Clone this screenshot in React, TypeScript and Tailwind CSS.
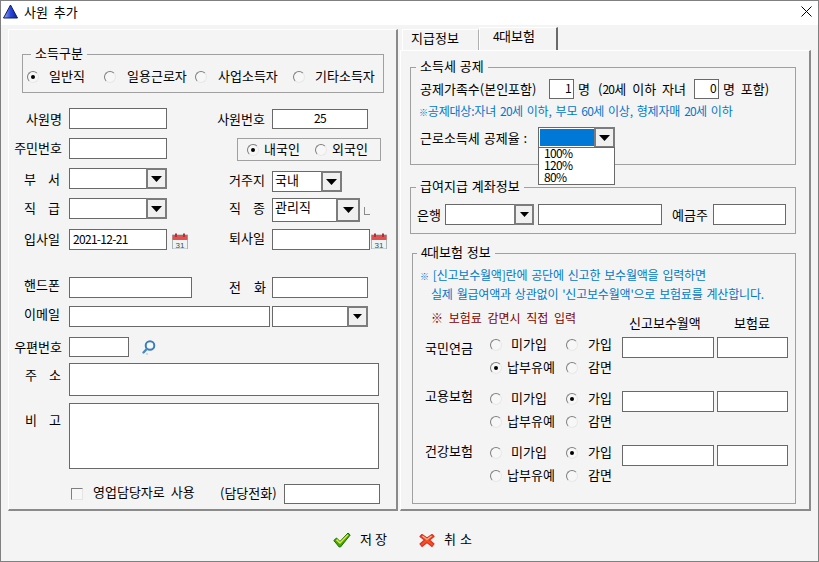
import React from "react";

const cx = (...a: (string | undefined | false)[]) => a.filter(Boolean).join(" ");

function D({ children }: { children?: React.ReactNode }) {
  return <span className="text-[12px] tracking-[-0.7px]">{children}</span>;
}

function Box({ className, children }: { className?: string; children?: React.ReactNode }) {
  return <div className={cx("shrink-0 border border-[#696969] bg-white px-[3px] flex items-center", children ? "pb-[2px]" : "", className)}>{children}</div>;
}

function Arrow({ small }: { small?: boolean }) {
  return (
    <svg width={small ? 9 : 11} height={small ? 5 : 6} viewBox="0 0 11 6">
      <path d="M0 0H11L5.5 6Z" fill="#000" />
    </svg>
  );
}

function Combo({ className, btn = "w-[21px]", text, small }: { className?: string; btn?: string; text?: string; small?: boolean }) {
  return (
    <div className={cx("shrink-0 flex border border-[#696969] bg-white", className)}>
      <div className="flex-1 pl-[2px] leading-[16px]">{text}</div>
      <div className={cx("-my-[1px] -mr-[1px] shrink-0 border-2 border-[#7c7c7c] bg-[#f0f0f0] flex items-center justify-center", btn)}>
        <Arrow small={small} />
      </div>
    </div>
  );
}

function Radio({ checked, className, children }: { checked?: boolean; className?: string; children?: React.ReactNode }) {
  return (
    <div className={cx("flex items-center shrink-0", className)}>
      <span className="w-[12px] h-[12px] rounded-full border border-t-[#7f7f7f] border-l-[#7f7f7f] border-r-[#e8e8e8] border-b-[#e8e8e8] bg-[#f7f7f7] flex items-center justify-center shrink-0">
        {checked && <span className="w-[4px] h-[4px] rounded-full bg-black" />}
      </span>
      <span className="whitespace-nowrap -translate-y-[1px]">{children}</span>
    </div>
  );
}

function Group({ title, className, legend, children }: { title: React.ReactNode; className?: string; legend: string; children?: React.ReactNode }) {
  return (
    <div className={cx("relative shrink-0 border border-[#a0a0a0]", className)}>
      <span className={cx("absolute -top-[10px] bg-[#f4f4f4] px-[4px] whitespace-nowrap leading-[16px] [word-spacing:1px]", legend)}>{title}</span>
      {children}
    </div>
  );
}

function Lbl({ className, children }: { className?: string; children?: React.ReactNode }) {
  return <div className={cx("shrink-0 text-right whitespace-nowrap", className)}>{children}</div>;
}

function Spaced({ a, b, className }: { a: string; b: string; className?: string }) {
  return (
    <div className={cx("shrink-0 flex justify-between", className)}>
      <span>{a}</span>
      <span>{b}</span>
    </div>
  );
}

function Calendar() {
  return (
    <svg width="16" height="16" viewBox="0 0 16 16" className="shrink-0">
      <rect x="0.5" y="2" width="15" height="14" fill="#eef3f3" stroke="#a9b4b4" />
      <rect x="0.5" y="2" width="15" height="5" fill="#e2504f" />
      <rect x="3" y="0.5" width="2" height="3.5" fill="#a33" />
      <rect x="11" y="0.5" width="2" height="3.5" fill="#a33" />
      <text x="8" y="14.5" textAnchor="middle" fontSize="8" fontFamily="Liberation Sans, sans-serif" fill="#35506a">31</text>
    </svg>
  );
}

function SearchIcon() {
  return (
    <svg width="14" height="15" viewBox="0 0 14 15" className="shrink-0">
      <circle cx="8" cy="5.5" r="4.3" fill="#f4f8fb" stroke="#3d7db5" strokeWidth="2" />
      <path d="M4.8 9L1.5 12.5" stroke="#4a8ac0" strokeWidth="2.4" strokeLinecap="round" />
      <path d="M4 14h2" stroke="#b8b8b8" strokeWidth="1" />
    </svg>
  );
}

function CheckIcon() {
  return (
    <svg width="18" height="16" viewBox="0 0 18 16" className="shrink-0">
      <path d="M0.8 8.5L3.5 6L7 9.5L15 1L17.2 3L7.5 15H6.2Z" fill="#3fa90a" stroke="#1d6b05" strokeWidth="1" strokeLinejoin="round" />
      <path d="M3.5 7.6L7 11L15 2.8" fill="none" stroke="#dfe93a" strokeWidth="1.5" />
    </svg>
  );
}

function XIcon() {
  return (
    <svg width="16" height="16" viewBox="0 0 16 16" className="shrink-0">
      <path d="M3 2.5L8 6L13 2.5L15 4.5L10.5 8L15 12L13 14.5L8 10.5L3 14.5L1 12L5.5 8L1 4.5Z" fill="#f4511e" stroke="#d8322a" strokeWidth="1.2" strokeLinejoin="round" />
      <path d="M3.5 4L8 7.5L12.5 4" fill="none" stroke="#ffb48a" strokeWidth="1.2" />
    </svg>
  );
}

function Insurance({ name, labelClass, sel }: { name: string; labelClass: string; sel: number }) {
  return (
    <div className="flex h-[54px] items-start">
      <div className={cx("w-[77px] shrink-0 pl-[12px] whitespace-nowrap", labelClass)}>{name}</div>
      <div className="w-[76px] shrink-0 flex flex-col gap-[7px]">
        <Radio checked={sel === 0} className="gap-[9px] h-[16px]">미가입</Radio>
        <Radio checked={sel === 2} className="gap-[5px] h-[16px]">납부유예</Radio>
      </div>
      <div className="w-[56px] shrink-0 flex flex-col gap-[7px]">
        <Radio checked={sel === 1} className="gap-[10px] h-[16px]">가입</Radio>
        <Radio className="gap-[10px] h-[16px]">감면</Radio>
      </div>
      <Box className="w-[92px] h-[21px]" />
      <Box className="w-[71px] h-[21px] ml-[3px]" />
    </div>
  );
}

export default function App() {
  return (
    <div className="w-[819px] h-[562px] overflow-hidden border border-[#808080] bg-[#f4f4f4] text-black text-[13px] leading-[16px] [word-spacing:3px] font-['Noto_Sans_CJK_KR','Liberation_Sans',sans-serif] flex flex-col">
      {/* title bar */}
      <div className="h-[24px] bg-white flex items-center shrink-0 pl-[2px] pr-[6px] pb-[3px]">
        <svg width="15" height="15" viewBox="0 0 15 15" className="shrink-0">
          <defs>
            <linearGradient id="tri" x1="0" x2="1" y1="0" y2="0">
              <stop offset="0" stopColor="#9db4f0" />
              <stop offset="0.5" stopColor="#2a46d8" />
              <stop offset="1" stopColor="#0c1f96" />
            </linearGradient>
          </defs>
          <path d="M7.5 1L14.5 14H0.5Z" fill="url(#tri)" stroke="#101a66" strokeWidth="1" />
        </svg>
        <span className="ml-[6px]">사원 추가</span>
        <svg width="11" height="11" viewBox="0 0 11 11" className="ml-auto">
          <path d="M0.5 0.5L10.5 10.5M10.5 0.5L0.5 10.5" stroke="#000" strokeWidth="1" />
        </svg>
      </div>

      <div className="flex pl-[7px] pr-[7px] items-end h-[486px] shrink-0">
        {/* left panel */}
        <div className="w-[390px] h-[482px] shrink-0 border-t border-l border-t-white border-l-white border-r-2 border-b-2 border-r-[#8a8a8a] border-b-[#8a8a8a] pl-[13px]">
          <Group title="소득구분" legend="left-[8px]" className="mt-[24px] w-[362px] h-[39px]">
            <div className="flex pl-[4px] pt-[14px]">
              <Radio checked className="gap-[10px] w-[77px]">일반직</Radio>
              <Radio className="gap-[11px] w-[91px]">일용근로자</Radio>
              <Radio className="gap-[11px] w-[98px]">사업소득자</Radio>
              <Radio className="gap-[10px]">기타소득자</Radio>
            </div>
          </Group>

          <div className="-ml-[13px]">
            <div className="flex mt-[15px] items-center h-[21px]">
              <Lbl className="w-[53px]">사원명</Lbl>
              <Box className="w-[98px] h-[21px] ml-[7px]" />
              <Lbl className="w-[98px]">사원번호</Lbl>
              <Box className="w-[96px] h-[20px] ml-[7px] justify-center"><D>25</D></Box>
            </div>

            <div className="flex mt-[9px] items-start h-[23px]">
              <Lbl className="w-[53px] pt-[2px]">주민번호</Lbl>
              <Box className="w-[98px] h-[21px] ml-[7px]" />
              <div className="ml-[70px] w-[144px] h-[23px] shrink-0 border border-[#a0a0a0] flex items-center pl-[9px]">
                <Radio checked className="gap-[5px] w-[68px]">내국인</Radio>
                <Radio className="gap-[5px]">외국인</Radio>
              </div>
            </div>

            <div className="flex mt-[7px] items-start h-[24px]">
              <Spaced a="부" b="서" className="w-[36px] ml-[15px] mt-[3px]" />
              <Combo className="w-[98px] h-[21px] ml-[9px]" />
              <Lbl className="w-[98px] mt-[4px]">거주지</Lbl>
              <Combo className="w-[70px] h-[21px] ml-[7px] mt-[3px]" text="국내" />
            </div>

            <div className="flex mt-[6px] items-start h-[24px]">
              <Spaced a="직" b="급" className="w-[36px] ml-[15px] mt-[2px]" />
              <Combo className="w-[98px] h-[21px] ml-[9px]" />
              <Spaced a="직" b="종" className="w-[36px] ml-[62px] mt-[2px]" />
              <Combo className="w-[88px] h-[24px] ml-[7px]" btn="w-[24px]" text="관리직" />
              <div className="w-[6px] h-[8px] ml-[4px] mt-[9px] border-l border-b border-[#8a8a8a]" />
            </div>

            <div className="flex mt-[7px] items-start h-[21px]">
              <Lbl className="w-[51px] mt-[2px]">입사일</Lbl>
              <Box className="w-[98px] h-[21px] ml-[9px]"><D>2021-12-21</D></Box>
              <div className="ml-[5px] mt-[4px]"><Calendar /></div>
              <Lbl className="w-[77px] mt-[1px]">퇴사일</Lbl>
              <Box className="w-[98px] h-[21px] ml-[7px]" />
              <div className="ml-[1px] mt-[4px]"><Calendar /></div>
            </div>

            <div className="flex mt-[27px] items-start h-[21px]">
              <Lbl className="w-[51px]">핸드폰</Lbl>
              <Box className="w-[123px] h-[21px] ml-[9px]" />
              <Spaced a="전" b="화" className="w-[37px] ml-[37px] mt-[2px]" />
              <Box className="w-[96px] h-[21px] ml-[6px]" />
            </div>

            <div className="flex mt-[8px] items-start h-[21px]">
              <Lbl className="w-[51px]">이메일</Lbl>
              <Box className="w-[201px] h-[21px] ml-[9px]" />
              <Combo className="w-[96px] h-[21px] ml-[2px]" small />
            </div>

            <div className="flex mt-[10px] items-center h-[20px]">
              <Lbl className="w-[53px]">우편번호</Lbl>
              <Box className="w-[60px] h-[20px] ml-[7px]" />
              <div className="ml-[13px]"><SearchIcon /></div>
            </div>

            <div className="flex mt-[6px] items-start h-[33px]">
              <Spaced a="주" b="소" className="w-[36px] ml-[16px] mt-[4px]" />
              <Box className="w-[310px] h-[33px] ml-[8px]" />
            </div>

            <div className="flex mt-[7px] items-start h-[66px]">
              <Spaced a="비" b="고" className="w-[36px] ml-[16px] mt-[9px]" />
              <Box className="w-[310px] h-[66px] ml-[8px]" />
            </div>

            <div className="flex mt-[15px] items-center h-[20px]">
              <span className="ml-[62px] w-[12px] h-[12px] shrink-0 border border-t-[#7f7f7f] border-l-[#7f7f7f] border-r-[#e4e4e4] border-b-[#e4e4e4] bg-[#f7f7f7]" />
              <span className="ml-[10px] w-[127px] shrink-0 whitespace-nowrap -translate-y-[2px]">영업담당자로 사용</span>
              <span className="shrink-0 w-[64px] whitespace-nowrap -translate-y-[1px]">(담당전화)</span>
              <Box className="w-[96px] h-[20px]" />
            </div>
          </div>
        </div>

        {/* right column */}
        <div className="ml-[2px] w-[411px] shrink-0 flex flex-col h-[484px]">
          <div className="flex items-end h-[23px] pl-[2px] shrink-0">
            <div className="w-[77px] h-[21px] shrink-0 border-t border-l border-t-white border-l-white border-r border-r-[#b0b0b0] pl-[8px]">지급정보</div>
            <div className="w-[79px] h-[23px] shrink-0 border-t border-l border-t-white border-l-white border-r-2 border-r-[#6a6a6a] pl-[13px]"><D>4</D>대보험</div>
          </div>
          <div className="flex-1 border-t border-l border-t-white border-l-white border-r-2 border-b-2 border-r-[#8a8a8a] border-b-[#8a8a8a] pl-[9px]">
            <Group title="소득세 공제" legend="left-[5px]" className="mt-[16px] w-[386px] h-[98px] pl-[9px]">
              <div className="flex items-center h-[20px] mt-[11px]">
                <span className="w-[129px] shrink-0 whitespace-nowrap">공제가족수(본인포함)</span>
                <Box className="w-[25px] h-[20px] justify-end !px-[2px]"><D>1</D></Box>
                <span className="ml-[4px] w-[20px] shrink-0">명</span>
                <span className="w-[96px] shrink-0 whitespace-nowrap">(<D>20</D>세 이하 자녀</span>
                <Box className="w-[25px] h-[20px] justify-end !px-[2px]"><D>0</D></Box>
                <span className="ml-[4px] shrink-0 whitespace-nowrap">명 포함)</span>
              </div>
              <div className="mt-[4px] h-[16px] -ml-[1px] text-[12px] tracking-[-0.2px] [word-spacing:1.5px] text-[#0078c8] whitespace-nowrap"><span className="text-[9px] font-bold">※</span>공제대상:자녀 <D>20</D>세 이하, 부모 <D>60</D>세 이상, 형제자매 <D>20</D>세 이하</div>
              <div className="flex mt-[8px] items-start">
                <span className="w-[118px] shrink-0 whitespace-nowrap mt-[3px] [word-spacing:1px]">근로소득세 공제율 :</span>
                <div className="relative w-[77px] h-[21px] shrink-0 flex border border-[#696969] bg-white p-[1px] pr-0">
                  <div className="flex-1 bg-[#0078d7]" />
                  <div className="-my-[2px] -mr-[1px] w-[21px] shrink-0 border-2 border-[#7c7c7c] bg-[#f0f0f0] flex items-center justify-center">
                    <Arrow />
                  </div>
                  <div className="absolute left-[-1px] top-[19px] w-[77px] h-[38px] border border-[#696969] bg-white pl-[5px] leading-[12px] text-[12px] tracking-[-0.7px] z-10">
                    <div className="h-[12px] -translate-y-[1px]">100%</div>
                    <div className="h-[12px] -translate-y-[1px]">120%</div>
                    <div className="h-[12px] -translate-y-[1px]">80%</div>
                  </div>
                </div>
              </div>
            </Group>

            <Group title="급여지급 계좌정보" legend="left-[5px]" className="mt-[22px] w-[386px] h-[47px] pl-[6px]">
              <div className="flex items-center h-[21px] mt-[16px]">
                <span className="w-[28px] shrink-0">은행</span>
                <Combo className="w-[89px] h-[21px]" small btn="w-[20px]" />
                <Box className="w-[124px] h-[21px] ml-[4px]" />
                <span className="ml-[10px] w-[41px] shrink-0">예금주</span>
                <Box className="w-[73px] h-[21px]" />
              </div>
            </Group>

            <Group title={<><D>4</D>대보험 정보</>} legend="left-[4px]" className="mt-[19px] ml-[2px] w-[384px] h-[251px]">
              <div className="mt-[11px] h-[19px] pl-[7px] leading-[19px] text-[12px] tracking-[-0.2px] [word-spacing:1.5px] text-[#0078c8] whitespace-nowrap"><span className="text-[9px] font-bold">※</span> [신고보수월액]란에 공단에 신고한 보수월액을 입력하면</div>
              <div className="h-[19px] pl-[18px] leading-[19px] text-[12px] tracking-[-0.2px] [word-spacing:1.5px] text-[#0078c8] whitespace-nowrap">실제 월급여액과 상관없이 '신고보수월액'으로 보험료를 계산합니다.</div>
              <div className="flex h-[34px] items-start">
                <span className="ml-[18px] w-[198px] shrink-0 text-[12px] text-[#800000] whitespace-nowrap mt-[7px]">※ 보험료 감면시 직접 입력</span>
                <span className="w-[105px] shrink-0 whitespace-nowrap mt-[12px]">신고보수월액</span>
                <span className="shrink-0 whitespace-nowrap mt-[12px]">보험료</span>
              </div>
              <Insurance name="국민연금" labelClass="mt-[3px]" sel={2} />
              <Insurance name="고용보험" labelClass="-mt-[3px]" sel={1} />
              <Insurance name="건강보험" labelClass="-mt-[2px]" sel={1} />
            </Group>
          </div>
        </div>
      </div>

      {/* footer */}
      <div className="flex items-center h-[18px] mt-[20px] pl-[332px] shrink-0">
        <CheckIcon />
        <span className="ml-[9px] w-[27px] shrink-0 flex justify-between -translate-y-[1px]"><span>저</span><span>장</span></span>
        <span className="ml-[32px]"><XIcon /></span>
        <span className="ml-[9px] w-[28px] shrink-0 flex justify-between -translate-y-[1px]"><span>취</span><span>소</span></span>
      </div>
    </div>
  );
}
